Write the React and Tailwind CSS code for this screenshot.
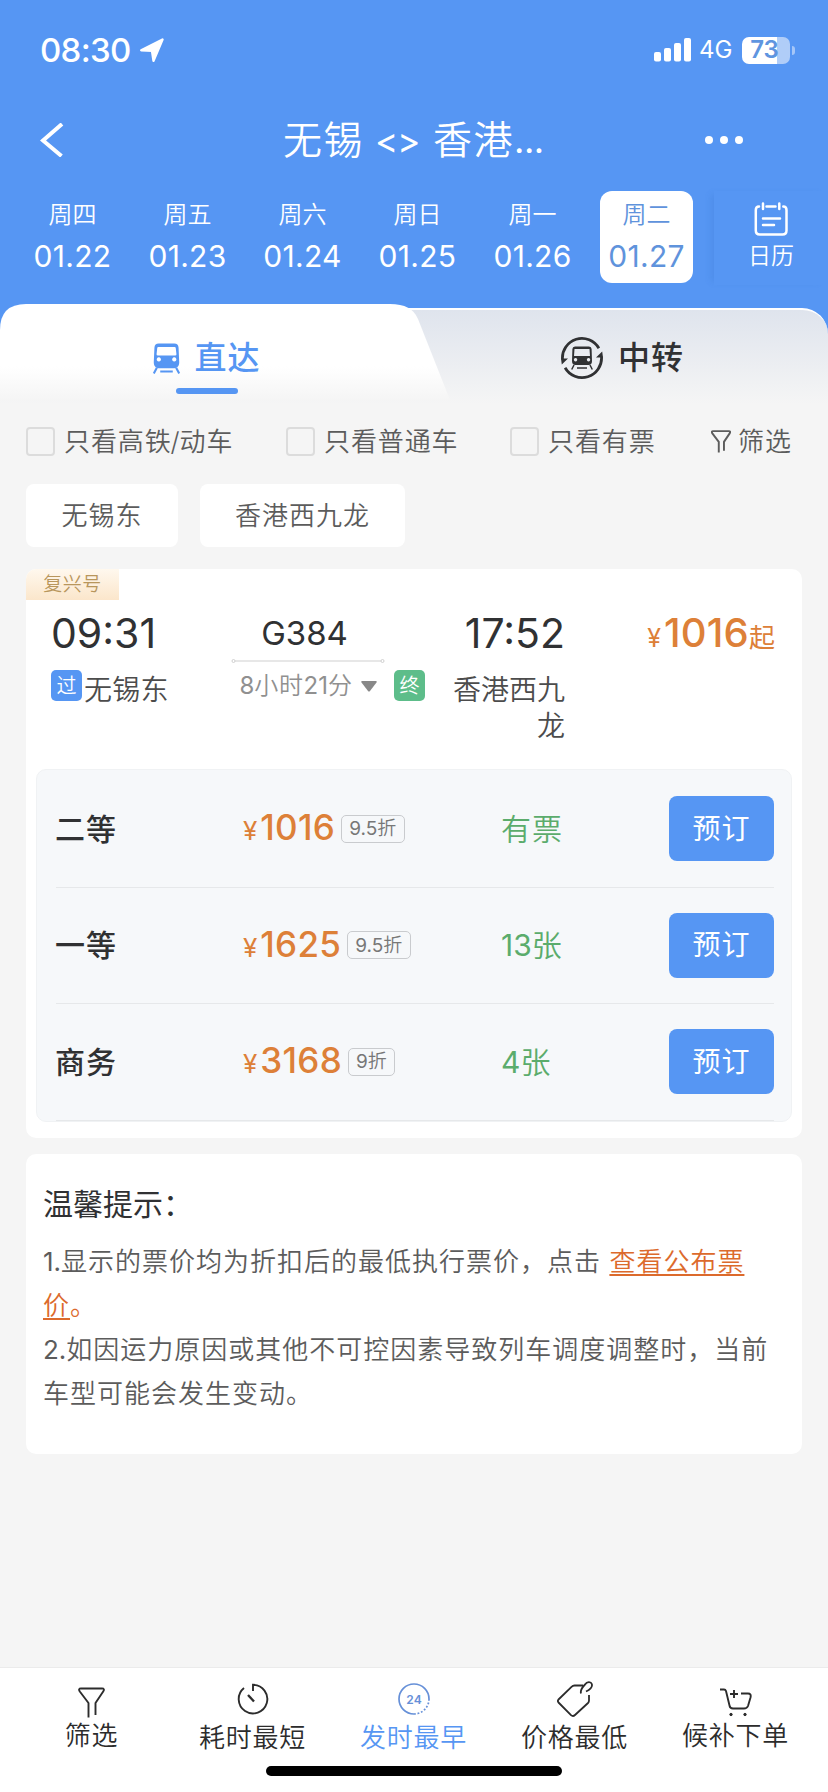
import React from 'react'

const days = [
  ['周四', '01.22'],
  ['周五', '01.23'],
  ['周六', '01.24'],
  ['周日', '01.25'],
  ['周一', '01.26'],
  ['周二', '01.27'],
]

const seats = [
  { name: '二等', price: '1016', off: ['9.5', '折'], left: ['', '有票'] },
  { name: '一等', price: '1625', off: ['9.5', '折'], left: ['13', '张'] },
  { name: '商务', price: '3168', off: ['9', '折'], left: ['4', '张'] },
]

function Num({ children }) {
  return <span className="font-normal tracking-normal">{children}</span>
}

function StatusBar() {
  return (
    <div className="flex h-[100px] items-center pl-10 pr-[33px]">
      <span className="w-[100px] text-[33px] leading-none font-medium tracking-[-0.7px]">08:30</span>
      <svg className="size-6" viewBox="0 0 24 24" fill="currentColor" stroke="currentColor" strokeWidth="2.400" strokeLinejoin="round">
        <path d="M1.200 12.200 22.500 1.500 13.500 22.800 12 12.800Z" />
      </svg>
      <div className="ml-auto flex items-center">
        <svg className="h-6 w-[37px]" viewBox="0 0 37 24" fill="currentColor">
          <rect x="0" y="14" width="7" height="9.500" rx="2" />
          <rect x="10" y="10" width="7" height="13.500" rx="2" />
          <rect x="20" y="5" width="7" height="18.500" rx="2" />
          <rect x="30" y="0" width="7" height="23.500" rx="2" />
        </svg>
        <span className="ml-[8px] w-[43px] text-[24px] leading-none">4G</span>
        <div className="flex h-[27px] w-12 items-center justify-center rounded-[7px] bg-linear-to-r from-white from-73% to-[#b0cdf8] to-73% pr-[3px] text-[24px] leading-none font-semibold text-[#5f95e0]">
          73
        </div>
        <div className="ml-[2px] h-[9px] w-[3px] rounded-r-full bg-[#a5c6f8]" />
      </div>
    </div>
  )
}

function NavBar() {
  return (
    <div className="flex h-20 items-center pl-10">
      <svg className="h-[34px] w-6" viewBox="0 0 24 34" fill="none" stroke="currentColor" strokeWidth="4">
        <path d="M22 1 3 17.500 21.500 33" />
      </svg>
      <h1 className="ml-[219px] flex w-[425px] items-center text-[39px] leading-[56px] font-[350] whitespace-nowrap">
        <span className="w-[92px] tracking-[1.5px]">无锡</span>
        <span className="w-[58px] text-[35px] font-normal tracking-[-1px]">&lt;&gt;</span>
        <span className="tracking-[1.5px]">香港</span>
        <span className="text-[36px] font-normal tracking-[-0.5px]">...</span>
      </h1>
      <svg className="-ml-[3px] h-2 w-[38px]" viewBox="0 0 38 8" fill="currentColor">
        <circle cx="4" cy="4" r="4" />
        <circle cx="19" cy="4" r="4" />
        <circle cx="34" cy="4" r="4" />
      </svg>
    </div>
  )
}

function DateStrip() {
  return (
    <div className="flex h-[124px] pt-[11px] pl-[15px]">
      {days.map(([week, date], i) => (
        <div
          key={date}
          className={
            i === 5
              ? 'ml-[10px] flex h-[92px] w-[93px] flex-col items-center rounded-[12px] bg-white pt-[6px] text-[#5f93dc]'
              : 'flex h-[92px] w-[115px] flex-col items-center pt-[6px]'
          }
        >
          <span className="text-[24px] leading-9 font-[350]">{week}</span>
          <span className="mt-[5px] text-[30px] leading-9 tracking-[0.3px]">{date}</span>
        </div>
      ))}
      <div className="ml-[21px] flex h-[94px] w-[114px] flex-col items-center pt-[11px] shadow-[-6px_0_6px_-3px_rgba(50,110,200,0.18)]">
        <svg className="h-[34px] w-[34px]" viewBox="0 0 34 34" fill="none" stroke="currentColor" strokeWidth="2.500" strokeLinecap="round">
          <path d="M5 4.500Q1.800 4.500 1.800 8V28.500Q1.800 32.500 5.800 32.500H28.500Q32.500 32.500 32.500 28.500V8Q32.500 4.500 29.300 4.500M12.500 4.500H21.500M9 1.500V7M25.300 1.500V7M9 16.500H26M9 23H20" />
        </svg>
        <span className="mt-[2px] text-[23px] leading-9 font-[350]">日历</span>
      </div>
    </div>
  )
}

function Train({ className }) {
  return (
    <svg className={className} viewBox="0 0 28 32" fill="none" stroke="currentColor">
      <path fill="currentColor" stroke="none" fillRule="evenodd" d="M6 .5h16c3 0 4.300 1.500 4.500 4L27.200 20c0 4-2 6-5 6H5.800c-3 0-5-2-5-6L1.500 4.500C1.700 2 3 .5 6 .5ZM5.500 4Q4.500 4 4.400 5L3.700 11.500Q3.600 13 5 13H23Q24.400 13 24.300 11.500L23.600 5Q23.500 4 22.500 4ZM6 14.800a2.200 2.200 0 1 0 .1 0ZM22 14.800a2.200 2.200 0 1 0 .1 0Z" />
      <path strokeWidth="2.200" d="M4 25.500.8 31.500M24 25.500l3.200 6M7.500 29.500h13" />
    </svg>
  )
}

function Tabs() {
  return (
    <div className="relative h-24">
      <div className="absolute inset-x-0 top-1 h-24 rounded-tr-[26px] border-t-2 border-white bg-linear-to-b from-[#dfe4ed] to-[#f5f5f5]" />
      <svg className="absolute top-0 left-0 h-24 w-[460px]" viewBox="0 0 460 96">
        <defs>
          <linearGradient id="tabFill" x1="0" y1="0" x2="0" y2="1">
            <stop offset="0.65" stopColor="#ffffff" />
            <stop offset="1" stopColor="#f5f5f5" />
          </linearGradient>
        </defs>
        <path d="M0 0H30V30H0Z" fill="#5696f3" />
        <path d="M0 96V26Q0 0 26 0H390Q412 0 418 15L450 96Z" fill="url(#tabFill)" />
      </svg>
      <div className="relative flex h-24">
        <div className="flex w-[414px] flex-col items-center pt-[30px]">
          <div className="flex h-12 items-center text-[#5696f3]">
            <Train className="h-[31px] w-[27px]" />
            <span className="ml-[14px] text-[32px] leading-12 font-medium tracking-[1px]">直达</span>
          </div>
          <div className="mt-[6px] h-[6px] w-[62px] rounded-full bg-[#5696f3]" />
        </div>
        <div className="flex h-[78px] flex-1 items-center justify-center pt-[30px] pl-[2px] text-[#303133]">
          <svg className="size-[44px]" viewBox="0 0 44 44" fill="none" stroke="currentColor" strokeWidth="2.800">
            <path d="M38.900 12.300A19.500 19.500 0 0 0 2.500 23.500M5.100 31.700A19.500 19.500 0 0 0 41.500 20.500" />
            <path d="M1 22.500H8L1.800 28.500ZM43 21.500H36L42.200 15.500Z" fill="currentColor" stroke="none" />
            <path fill="currentColor" stroke="none" fillRule="evenodd" d="M15 10.500h14q2.500 0 2.600 2.500l.4 12q0 4-3.500 4h-13q-3.500 0-3.500-4l.4-12q.1-2.500 2.600-2.500Zm-.5 2.500-.5 7h16l-.5-7ZM15.500 22a1.700 1.700 0 1 0 .1 0ZM28.500 22a1.700 1.700 0 1 0 .1 0Z" />
            <path strokeWidth="1.500" d="m14 29-2.300 4.500M30 29l2.300 4.500M17 32h10" />
          </svg>
          <span className="ml-[14px] text-[32px] leading-12 font-medium tracking-[1px]">中转</span>
        </div>
      </div>
    </div>
  )
}

function Funnel({ className, sw }) {
  return (
    <svg className={className} viewBox="0 0 27 31" fill="none" stroke="currentColor" strokeWidth={sw} strokeLinejoin="round">
      <path d="M10.500 30.500V16L1.800 4.500C.5 2.500 1 1.500 3 1.500h21c2 0 2.500 1 1.200 3L17.500 16v12" />
    </svg>
  )
}

function Check({ label, className }) {
  return (
    <label className={className}>
      <span className="size-[29px] rounded-[4px] border-2 border-[#dcdcdc]" />
      <span className="ml-[9px]">{label}</span>
    </label>
  )
}

function Filters() {
  return (
    <div className="pl-[26px] pt-[20px] text-[26px] font-[350] text-[#5c5c5c]">
      <div className="flex h-[42px] items-center tracking-[0.9px] whitespace-nowrap">
        <Check
          label={
            <>
              只看高铁<span className="-mx-[1px]">/</span>动车
            </>
          }
          className="flex w-[260px] items-center"
        />
        <Check label="只看普通车" className="flex w-[224px] items-center" />
        <Check label="只看有票" className="flex w-[201px] items-center" />
        <Funnel className="h-[23px] w-[20px]" sw="2.600" />
        <span className="ml-[7px]">筛选</span>
      </div>
      <div className="mt-[22px] flex gap-[22px] tracking-[1px]">
        <div className="flex h-[63px] w-[152px] items-center justify-center rounded-[8px] bg-white">无锡东</div>
        <div className="flex h-[63px] w-[205px] items-center justify-center rounded-[8px] bg-white">香港西九龙</div>
      </div>
    </div>
  )
}

function TrainCard() {
  return (
    <div className="mx-[26px] mt-[22px] h-[569px] overflow-hidden rounded-[10px] bg-white">
      <div className="flex h-[31px] w-[93px] items-center justify-center bg-linear-to-b from-[#fff8ee] to-[#fbe6cb] text-[19px] leading-none font-[350] tracking-[0.5px] text-[#b8965c]">
        复兴号
      </div>
      <div className="flex h-[169px] pl-[25px] text-[#303133]">
        <div className="w-[180px] pt-[8px]">
          <div className="text-[41px] leading-[50px]">09:31</div>
          <div className="mt-[12px] flex">
            <span className="flex size-[31px] items-center justify-center rounded-[5px] bg-[#5696f3] text-[20px] leading-none font-[350] text-white">过</span>
            <span className="ml-[2px] pt-[2px] text-[28px] leading-9 font-[350] tracking-[0.3px] text-[#4c4c4c]">无锡东</span>
          </div>
        </div>
        <div className="flex w-[154px] flex-col items-center pt-[13px]">
          <div className="mr-[7px] text-[33px] leading-10">G384</div>
          <svg className="mt-[5px] h-[6px] w-[154px]" viewBox="0 0 154 6" fill="none" stroke="#cfcfcf">
            <path d="M4 3h146" />
            <circle cx="2.500" cy="3" r="1.500" />
            <circle cx="151.500" cy="3" r="1.500" />
          </svg>
          <div className="mt-[4px] flex items-center gap-[8px] text-[24px] leading-9 font-[350] tracking-[0.6px] text-[#909090]">
            <span className="whitespace-nowrap"><Num>8</Num>小时<Num>21</Num>分</span>
            <svg className="h-[11px] w-4" viewBox="0 0 16 11" fill="#888">
              <path d="M1.500 0h13q2 0 1 1.500L9 10q-1 1.200-2 0L.5 1.500Q-.5 0 1.500 0Z" />
            </svg>
          </div>
        </div>
        <div className="w-[180px] pt-[8px] text-right">
          <div className="text-[41px] leading-[50px]">17:52</div>
          <div className="mt-[12px] flex justify-between pl-[9px]">
            <span className="flex size-[31px] items-center justify-center rounded-[5px] bg-[#5dbd8a] text-[20px] leading-none font-[350] text-white">终</span>
            <span className="w-[120px] pt-[2px] text-[28px] leading-9 font-[350] text-[#4c4c4c]">香港西九<br />龙</span>
          </div>
        </div>
        <div className="flex-1 pt-[8px] pr-[27px] text-right leading-[50px] whitespace-nowrap text-[#dd8038]">
          <span className="mr-[3px] text-[25px]">¥</span>
          <span className="text-[40px] font-medium tracking-[0.2px]">1016</span>
          <span className="text-[26px] font-normal">起</span>
        </div>
      </div>
      <div className="mx-[10px] h-[353px] overflow-hidden rounded-[10px] border border-[#f0f2f4] bg-[#f6f8fa] pt-[1px] pr-[17px] pl-[19px]">
        {seats.map((s) => (
          <div key={s.name} className="flex h-[116.6px] items-center border-b border-[#e6e8ea]">
            <span className="-ml-[1px] w-[188px] text-[30px] leading-10 font-medium tracking-[1px] text-[#303133]">{s.name}</span>
            <div className="flex w-[258px] items-center">
              <div className="pt-[4px] leading-10 whitespace-nowrap text-[#dd8038]">
                <span className="mr-[3px] text-[26px]">¥</span>
                <span className="text-[35px] font-medium tracking-[0.3px]">{s.price}</span>
              </div>
              <span className="ml-[6px] flex h-[28px] items-center rounded-[5px] border border-[#c9cbce] px-[7px] text-[19px] leading-none font-[350] tracking-[0.3px] text-[#777]">
                <Num>{s.off[0]}</Num>{s.off[1]}
              </span>
            </div>
            <span className="text-[30px] leading-10 font-[350] tracking-[1px] text-[#5bac6c]"><Num>{s.left[0]}</Num>{s.left[1]}</span>
            <button className="ml-auto h-[65px] w-[105px] rounded-[8px] bg-[#5696f3] text-[28px] leading-10 tracking-[1px] text-white">预订</button>
          </div>
        ))}
      </div>
    </div>
  )
}

function Tips() {
  return (
    <div className="mx-[26px] mt-4 h-[300px] rounded-[10px] bg-white pt-[28px] pl-[17px] text-[#5c5c5c]">
      <h2 className="text-[30px] leading-11 text-[#303133]">温馨提示：</h2>
      <div className="mt-[14px] text-[26px] leading-11 font-[350] tracking-[1px] whitespace-nowrap">
        <p>
          <Num>1.</Num>显示的票价均为折扣后的最低执行票价，点击{' '}
          <span className="text-[#dc6a2c] underline decoration-2 underline-offset-[3px]">查看公布票</span>
        </p>
        <p className="text-[#dc6a2c]">
          <span className="underline decoration-2 underline-offset-[3px]">价</span>。
        </p>
        <p><Num>2.</Num>如因运力原因或其他不可控因素导致列车调度调整时，当前</p>
        <p>车型可能会发生变动。</p>
      </div>
    </div>
  )
}

function BottomItem({ children, label, className }) {
  return (
    <div className={className}>
      <div className="flex h-9 items-center justify-center">{children}</div>
      <span className="mt-[4px] text-[26px] leading-9 tracking-[0.7px]">{label}</span>
    </div>
  )
}

function BottomBar() {
  return (
    <div className="mt-auto h-[125px] border-t border-[#ebebeb] bg-white">
      <div className="flex h-[98px] pl-[11px] font-[350] text-[#2c2c2c]">
        <BottomItem label="筛选" className="flex w-[161px] flex-col items-center pt-[10px]">
          <Funnel className="mt-[12px] h-[31px] w-[27px]" sw="1.900" />
        </BottomItem>
        <BottomItem label="耗时最短" className="flex w-[161px] flex-col items-center pt-[12px]">
          <svg className="mt-[2px] size-8" viewBox="0 0 32 32" fill="none" stroke="currentColor" strokeWidth="1.900">
            <path d="M16 8V1.800A14.300 14.300 0 1 1 7 5" />
            <path d="m11 12 6 6.500" strokeWidth="2.400" />
          </svg>
        </BottomItem>
        <BottomItem label="发时最早" className="flex w-[161px] flex-col items-center pt-[12px] text-[#5696f3]">
          <svg className="mt-[1px] size-8" viewBox="0 0 32 32" fill="none" stroke="#6690d8" strokeWidth="1.700">
            <path d="M16 31A15 15 0 1 1 31 16" />
            <path d="M31 16A15 15 0 0 1 16 31" strokeDasharray="1.800 1.800" />
            <text x="16" y="20.500" textAnchor="middle" fill="#6690d8" stroke="none" fontSize="12" fontWeight="600">24</text>
          </svg>
        </BottomItem>
        <BottomItem label="价格最低" className="flex w-[161px] flex-col items-center pt-[12px]">
          <svg className="mt-[2px] h-9 w-9" viewBox="0 0 36 36" fill="none" stroke="currentColor" strokeWidth="1.800" strokeLinejoin="round">
            <path d="M26 4.500H17.500Q15.800 4.500 14.500 5.800L1.500 18.500Q.3 20 1.500 21.500L14 34.200Q16 36 18 34L31 22Q32 21 32 19.500V14" />
            <path d="M24 12.500C23 9 25.500 6 28 3.500 30 .3 34 .5 34.800 3 35.800 6 33 8.500 29 10.500" />
          </svg>
        </BottomItem>
        <BottomItem label="候补下单" className="flex w-[161px] flex-col items-center pt-[10px]">
          <svg className="mt-[12px] h-[29px] w-[32px]" viewBox="0 0 32 29" fill="none" stroke="currentColor" strokeWidth="1.900">
            <path d="M0 1.500h4q1.500 0 2 1.500l3.500 14.500Q10 20.500 13 20.500h11q3 0 4-2.500l2.500-8.500Q31.500 5.500 28 5.500h-7M14 2v8M10 6h8" />
            <circle cx="11" cy="26.500" r="1.200" fill="currentColor" strokeWidth="1" />
            <circle cx="25" cy="26.500" r="1.200" fill="currentColor" strokeWidth="1" />
          </svg>
        </BottomItem>
      </div>
      <div className="mx-auto h-[10px] w-[296px] rounded-full bg-black" />
    </div>
  )
}

export default function App() {
  return (
    <div className="flex h-[1792px] w-[828px] flex-col overflow-hidden bg-[#f5f5f5] font-['Inter','Noto_Sans_CJK_SC',sans-serif]">
      <header className="h-[304px] bg-[#5696f3] text-white">
        <StatusBar />
        <NavBar />
        <DateStrip />
      </header>
      <div className="bg-linear-to-b from-[#5696f3] from-40% to-[#f5f5f5] to-40%">
        <Tabs />
      </div>
      <Filters />
      <TrainCard />
      <Tips />
      <BottomBar />
    </div>
  )
}
